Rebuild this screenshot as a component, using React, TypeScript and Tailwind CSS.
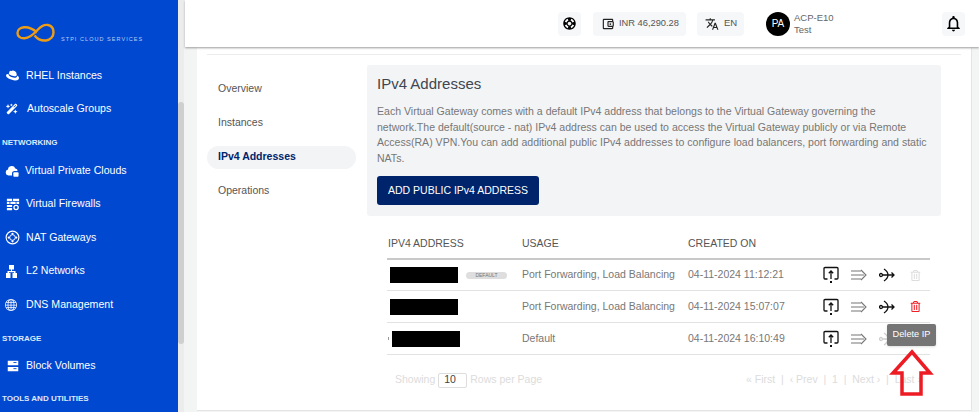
import React from "react";
import { FaRedhat, FaRegTrashAlt } from "react-icons/fa";
import { FaWandMagicSparkles } from "react-icons/fa6";
import { BsGlobe } from "react-icons/bs";
import {
  MdOutlineSupport,
  MdOutlineAccountBalanceWallet,
  MdOutlineTranslate,
  MdOutlineNotifications,
} from "react-icons/md";

const CloudLockIcon = () => (
  <svg width="14" height="14" viewBox="0 0 16 16" fill="white">
    <path d="M4 13a3.4 3.4 0 0 1-.6-6.7A4.4 4.4 0 0 1 11.8 5a3 3 0 0 1 2.6 3H11a3 3 0 0 0-3 3v2H4Z" />
    <rect x="9.5" y="9.5" width="6" height="5" rx="1" />
  </svg>
);

const FirewallIcon = () => (
  <svg width="14" height="14" viewBox="0 0 16 16" fill="white">
    <path d="M1 2h6v2.5H1zM8 2h7v2.5H8zM1 5.500h3V8H1zM5 5.500h6V8H5zM12 5.500h3V8h-3zM1 9h6v2.500H1zM1 12.500h6V15H1z" />
    <circle cx="11.500" cy="12" r="2.400" fill="none" stroke="white" strokeWidth="1.500" />
  </svg>
);

const NatIcon = () => (
  <svg width="15" height="15" viewBox="0 0 16 16" fill="none" stroke="white">
    <circle cx="8" cy="8" r="6.800" strokeWidth="1.200" />
    <circle cx="8" cy="8" r="3" strokeWidth="1" />
    <g fill="white" stroke="none">
      <circle cx="8" cy="4" r="1.200" />
      <circle cx="8" cy="12" r="1.200" />
      <circle cx="4" cy="8" r="1.200" />
      <circle cx="12" cy="8" r="1.200" />
    </g>
  </svg>
);

const L2Icon = () => (
  <svg width="13" height="13" viewBox="0 0 13 13" fill="white">
    <path d="M4 0h5v4.500H7v1.500h3.500v2H12v5H7.500V8H9V7.200H4V8h1.500v5H1V8h1.500V6H6V4.500H4z" />
  </svg>
);

const BlockIcon = () => (
  <svg width="14" height="14" viewBox="0 0 16 16" fill="white">
    <path d="M2 2h12v5H2zM2 9h12v5H2z" />
    <path d="M8.500 4h3.500M8.500 11h3.500" stroke="#0048d0" strokeWidth="1" />
  </svg>
);

const PublishIcon = () => (
  <svg width="16" height="18" viewBox="0 0 16 18" fill="none" stroke="#111" strokeWidth="1.300">
    <path d="M4.500 13H2a1 1 0 0 1-1-1V2.500a1 1 0 0 1 1-1h12a1 1 0 0 1 1 1V12a1 1 0 0 1-1 1h-2.500" />
    <path d="M8 13V5M5.800 7.200 8 5l2.200 2.200" />
    <rect x="7" y="15" width="2" height="2" fill="#111" stroke="none" />
  </svg>
);

const ForwardIcon = () => (
  <svg width="16" height="12" viewBox="0 0 16 12" fill="none" stroke="#777" strokeWidth="1.100">
    <path d="M0 2h10M0 6h13M0 10h10M10 1l5 5-5 5" />
  </svg>
);

const BalancerIcon = ({ faded = false }: { faded?: boolean }) => (
  <svg width="16" height="14" viewBox="0 0 16 14" fill="none" stroke="#111" strokeWidth="1.300" opacity={faded ? 0.2 : 1}>
    <circle cx="2" cy="7" r="1.500" />
    <path d="M3.500 7H15M12.500 4.500 15 7l-2.500 2.500M5 1c3 2 4 4 4 6s-1 4-4 6" />
  </svg>
);

const navRow = "flex items-center h-[33.5px] shrink-0 text-[10.6px] text-white whitespace-nowrap";
const sectionLabel = "flex items-center h-[28px] pt-[6px] shrink-0 pl-[2px] text-[8px] font-bold text-[#dfe8fb] whitespace-nowrap";

const Sidebar = () => (
  <aside className="w-[178px] shrink-0 bg-[#0048d0] h-full flex flex-col overflow-hidden">
    <div className="relative h-[59px] shrink-0">
      <svg className="absolute left-[16px] top-[23px]" width="39" height="19" viewBox="0 0 39 19" fill="none" stroke="#ee9c14" strokeWidth="2.400">
        <path d="M21 9.500C16 5 12 4 8 4.300 4 4.600 1.500 7 1.500 10s2.500 5.500 7 5.300c5-.2 10-5 13-8.300 3-3.300 7-5.500 10.500-5 3.500.5 5.500 3.500 5.500 7.500s-3 7.500-7.500 8c-5 .5-9-2-11.500-5" />
      </svg>
      <div className="absolute left-[61px] top-[35px] text-[5.5px] tracking-[1.05px] text-[#b9cdf2] whitespace-nowrap">STPI CLOUD SERVICES</div>
    </div>
    <div className={navRow}>
      <span className="w-[26px] pl-[6px]"><FaRedhat size={13} /></span>RHEL Instances
    </div>
    <div className={navRow}>
      <span className="w-[27px] pl-[6px]"><FaWandMagicSparkles size={12} /></span>Autoscale Groups
    </div>
    <div className={sectionLabel}>NETWORKING</div>
    <div className={navRow}>
      <span className="w-[25px] pl-[5px]"><CloudLockIcon /></span>Virtual Private Clouds
    </div>
    <div className={navRow}>
      <span className="w-[26px] pl-[6px]"><FirewallIcon /></span>Virtual Firewalls
    </div>
    <div className={navRow}>
      <span className="w-[26px] pl-[5px]"><NatIcon /></span>NAT Gateways
    </div>
    <div className={navRow}>
      <span className="w-[26px] pl-[5px]"><L2Icon /></span>L2 Networks
    </div>
    <div className={navRow}>
      <span className="w-[26px] pl-[5px]"><BsGlobe size={12} /></span>DNS Management
    </div>
    <div className={sectionLabel}>STORAGE</div>
    <div className="flex items-center h-[32.5px] shrink-0 text-[10.6px] text-white whitespace-nowrap">
      <span className="w-[26px] pl-[6px]"><BlockIcon /></span>Block Volumes
    </div>
    <div className={sectionLabel}>TOOLS AND UTILITIES</div>
  </aside>
);

const Scrollbar = () => (
  <div className="w-[6px] shrink-0 h-full bg-[#ececec] pt-[102px]">
    <div className="w-full h-[242px] rounded-[3px] bg-[#cfcfcf]" />
  </div>
);

const Header = () => (
  <header className="h-[47px] shrink-0 bg-white shadow-[0_1px_2px_#9c9c9c] flex items-center pl-[373px] pr-[14px] relative z-10 whitespace-nowrap">
    <div className="w-[23px] h-[24px] shrink-0 rounded bg-[#f6f7f8] flex items-center justify-center">
      <MdOutlineSupport size={15} className="text-black" />
    </div>
    <div className="ml-[12px] w-[93px] h-[24px] shrink-0 rounded bg-[#f6f7f8] flex items-center pl-[8px] gap-[4px] text-[9.3px] text-[#555]">
      <MdOutlineAccountBalanceWallet size={14} className="text-[#222]" />
      INR 46,290.28
    </div>
    <div className="ml-[11px] w-[47px] h-[24px] shrink-0 rounded bg-[#f6f7f8] flex items-center pl-[8px] gap-[5px] text-[9.5px] text-[#555]">
      <MdOutlineTranslate size={14} className="text-[#222]" />
      EN
    </div>
    <div className="ml-[22px] w-[24px] h-[24px] shrink-0 rounded-full bg-black text-white text-[10px] flex items-center justify-center">PA</div>
    <div className="ml-[4px] text-[9.5px] leading-[12px] text-[#666]">
      <div>ACP-E10</div>
      <div>Test</div>
    </div>
    <div className="ml-auto w-[23px] h-[24px] shrink-0 rounded bg-[#f6f7f8] flex items-center justify-center">
      <MdOutlineNotifications size={19} className="text-black" />
    </div>
  </header>
);

const SideTabs = () => (
  <div className="w-[149px] shrink-0 pt-[7px] text-[10.5px] text-[#555]">
    <div className="h-[34px] pl-[11px] flex items-center">Overview</div>
    <div className="h-[34px] pl-[11px] flex items-center">Instances</div>
    <div className="h-[23px] my-[5.5px] pl-[11px] flex items-center rounded-full bg-[#f3f4f6] font-bold text-[#00246b]">IPv4 Addresses</div>
    <div className="h-[34px] pl-[11px] flex items-center">Operations</div>
  </div>
);

const rows = [
  { pad: "ml-[2px]", height: "h-[31px]", usage: "Port Forwarding, Load Balancing", created: "04-11-2024 11:12:21", isDefault: true },
  { pad: "ml-[2px]", height: "h-[32px]", usage: "Port Forwarding, Load Balancing", created: "04-11-2024 15:07:07", isDefault: false },
  { pad: "ml-[3px]", height: "h-[32px]", usage: "Default", created: "04-11-2024 16:10:49", isDefault: false },
];

const AddressTable = () => (
  <div className="ml-[20px] w-[543px]">
    <div className="h-[31px] pt-px grid grid-cols-[134px_166px_1fr] items-center pl-px text-[10.5px] text-[#555] border-b-2 border-[#c9c9c9]">
      <span>IPV4 ADDRESS</span>
      <span>USAGE</span>
      <span>CREATED ON</span>
    </div>
    {rows.map((row, i) => (
      <div key={i} className={`${row.height} grid grid-cols-[134px_166px_1fr] items-center pl-px border-b border-[#e2e2e2] text-[10.5px] text-[#777]`}>
        <div className="flex items-center">
          {i === 2 && <div className="w-px h-[3px] bg-[#999]" />}
          <div className={`${row.pad} w-[68px] h-[16px] bg-black`} />
          {row.isDefault && (
            <span className="ml-[8px] w-[41px] h-[7px] rounded-full bg-[#dedede] text-[5px] leading-[7px] text-center text-[#777]">DEFAULT</span>
          )}
        </div>
        <span className="whitespace-nowrap">{row.usage}</span>
        <div className="flex items-center">
          <span className="w-[135px] whitespace-nowrap">{row.created}</span>
          <span className="w-[28px]"><PublishIcon /></span>
          <span className="w-[28px]"><ForwardIcon /></span>
          {i < 2 ? (
            <>
              <span className="w-[31px]"><BalancerIcon /></span>
              {i === 0 ? <FaRegTrashAlt size={11} className="text-[#ddd]" /> : <FaRegTrashAlt size={11} className="text-[#f01f25]" />}
            </>
          ) : (
            <span className="w-[28px]"><BalancerIcon faded /></span>
          )}
        </div>
      </div>
    ))}
    <div className="h-[50px] pl-[8px] flex items-center text-[10.5px] text-[#dcdcdc] whitespace-nowrap">
      <span>Showing</span>
      <span className="ml-[3px] w-[29px] h-[15px] border border-[#ddd] rounded-[2px] text-[#444] flex items-center pl-[5px]">10</span>
      <span className="ml-[3px]">Rows per Page</span>
      <span className="ml-[204px]">« First&nbsp; |&nbsp; ‹ Prev&nbsp; |&nbsp; 1&nbsp; |&nbsp; Next ›&nbsp; |&nbsp; Last »</span>
    </div>
  </div>
);

const DeleteHint = () => (
  <>
    <div className="absolute left-[887px] top-[324px] w-[49px] h-[22px] z-20 rounded-[2px] bg-[#757575] shadow text-white text-[9.2px] flex items-center justify-center whitespace-nowrap">
      Delete IP
    </div>
    <svg className="absolute left-[888px] top-[346px] z-30" width="48" height="52" viewBox="0 0 48 52" fill="none" stroke="#ed1c24" strokeWidth="3.500">
      <path d="M24 6 5 27h9v21h19V27h9Z" strokeLinejoin="miter" />
    </svg>
  </>
);

export default function App() {
  return (
    <div className="relative w-[979px] h-[412px] overflow-hidden flex bg-[#f3f4f4] font-['Liberation_Sans',Arial,sans-serif]">
      <Sidebar />
      <Scrollbar />
      <main className="flex-1 min-w-0 flex flex-col pl-px">
        <Header />
        <div className="flex-1 min-h-0 pl-[12px] pr-[7px] pb-px">
          <div className="h-full bg-white border-r border-b border-[#e4e4e4] rounded-br-[2px] px-[10px] pt-[7px]">
            <div className="border-t border-[#ececec]" />
            <div className="flex pt-[10px]">
              <SideTabs />
              <div className="ml-[11px]">
                <section className="w-[574px] h-[151px] rounded-[3px] bg-[#f3f4f6] pt-[9px] pl-[10px] pr-[8px]">
                  <h2 className="text-[15px] leading-[20px] text-[#3f4650]">IPv4 Addresses</h2>
                  <p className="mt-[10px] text-[10.55px] leading-[15.5px] text-[#777]">
                    Each Virtual Gateway comes with a default IPv4 address that belongs to the Virtual Gateway governing the network.The default(source - nat) IPv4 address can be used to access the Virtual Gateway publicly or via Remote Access(RA) VPN.You can add additional public IPv4 addresses to configure load balancers, port forwarding and static NATs.
                  </p>
                  <button className="mt-[10px] w-[162px] h-[29px] rounded-[3px] bg-[#00246b] text-white text-[10.5px] font-medium">
                    ADD PUBLIC IPv4 ADDRESS
                  </button>
                </section>
                <div className="pt-[13px]">
                  <AddressTable />
                </div>
              </div>
            </div>
          </div>
        </div>
      </main>
      <DeleteHint />
    </div>
  );
}
